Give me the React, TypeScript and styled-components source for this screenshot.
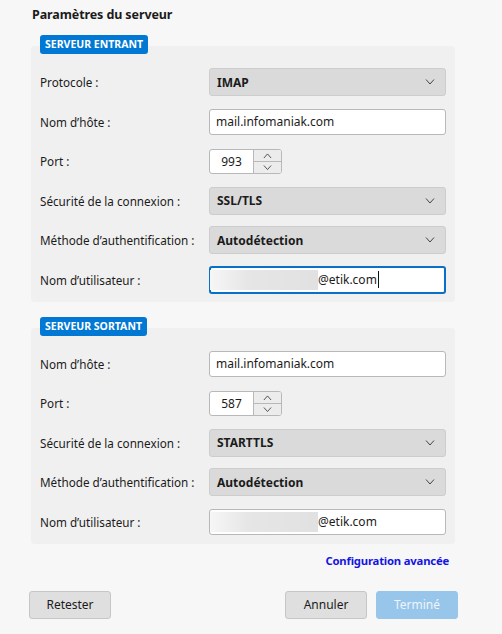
import React from "react";
import styled, { createGlobalStyle } from "styled-components";

const GlobalStyle = createGlobalStyle`
  * { box-sizing: border-box; }
  body {
    margin: 0;
    background: #f7f7f7;
    font-family: "Noto Sans", "Open Sans", sans-serif;
    color: #1b1b1b;
  }
`;

const Page = styled.div`
  width: 502px;
  height: 634px;
  padding: 6px 47px 0 31px;
  display: flex;
  flex-direction: column;
`;

const Titre = styled.h1`
  margin: 0 0 0 1px;
  font-size: 12.5px;
  line-height: 18px;
  font-weight: 700;
  letter-spacing: -0.1px;
`;

const Panneau = styled.section<{ $espace: number }>`
  width: 424px;
  margin-top: ${(p) => p.$espace}px;
  background: #f0f0f0;
  border-radius: 4px;
  padding: 0 9px 2px;
  display: flex;
  flex-direction: column;
`;

const Badge = styled.div`
  align-self: flex-start;
  margin: -11px 0 8.5px;
  height: 19px;
  padding: 0 5px;
  background: #0078d4;
  color: #fff;
  border-radius: 3px;
  font-size: 10.5px;
  font-weight: 700;
  line-height: 19px;
`;

const Ligne = styled.div`
  height: 39.5px;
  display: flex;
  align-items: center;
`;

const Libelle = styled.label`
  width: 169px;
  font-size: 11.7px;
`;

const Liste = styled.div`
  width: 237px;
  height: 28px;
  padding: 0 10px 0 7px;
  display: flex;
  align-items: center;
  justify-content: space-between;
  background: #dadada;
  border: 1px solid #cdcdcd;
  border-radius: 3px;
  font-size: 12px;
  font-weight: 700;
`;

const Champ = styled.div<{ $actif?: boolean }>`
  width: 237px;
  height: ${(p) => (p.$actif ? 28 : 26)}px;
  padding: 0 ${(p) => (p.$actif ? 5 : 6)}px;
  display: flex;
  align-items: center;
  background: #fff;
  border: ${(p) => (p.$actif ? "2px solid #0a6fc6" : "1px solid #b8b8b8")};
  border-radius: 3px;
  font-size: 12px;
`;

const Masque = styled.span`
  width: 108px;
  height: 20px;
  margin-left: -6px;
  background: linear-gradient(to right, #f6f6f6, #e6e6e6 35%, #e1e1e1);
`;

const Curseur = styled.span`
  width: 1px;
  height: 17px;
  margin-left: 1px;
  background: #111;
`;

const Compteur = styled.div`
  height: 25px;
  display: flex;
  border: 1px solid #b8b8b8;
  border-radius: 3px;
  background: #fff;
  overflow: hidden;
`;

const Valeur = styled.div`
  width: 44px;
  display: flex;
  align-items: center;
  justify-content: center;
  font-size: 12px;
  border-right: 1px solid #b8b8b8;
`;

const Fleches = styled.div`
  width: 27px;
  display: flex;
  flex-direction: column;
  background: #ececec;
`;

const Fleche = styled.div`
  flex: 1;
  display: flex;
  align-items: center;
  justify-content: center;
  & + & { border-top: 1px solid #b8b8b8; }
`;

const Lien = styled.a`
  align-self: flex-end;
  margin: 8px 6px 0 0;
  font-size: 11.3px;
  font-weight: 700;
  line-height: 17px;
  letter-spacing: -0.2px;
  color: #1515e2;
  text-decoration: none;
`;

const Pied = styled.div`
  margin: 22px 0 0 -2px;
  width: 429px;
  display: flex;
  gap: 9px;
`;

const Bouton = styled.button<{ $principal?: boolean; $pousse?: boolean }>`
  width: 82px;
  height: 28px;
  margin-left: ${(p) => (p.$pousse ? "auto" : "0")};
  font-family: inherit;
  font-size: 12px;
  color: ${(p) => (p.$principal ? "#eef5fc" : "#1b1b1b")};
  background: ${(p) => (p.$principal ? "#98c5ea" : "#dfdfdf")};
  border: 1px solid ${(p) => (p.$principal ? "#98c5ea" : "#c6c6c6")};
  border-radius: 3px;
`;

function Chevron({ haut, taille = 10 }: { haut?: boolean; taille?: number }) {
  return (
    <svg width={taille} height={taille / 2 + 1} viewBox="0 0 10 6">
      <path
        d={haut ? "M1 5.5 L5 1 L9 5.5" : "M1 0.5 L5 5 L9 0.5"}
        fill="none"
        stroke="#444"
        strokeWidth="1"
      />
    </svg>
  );
}

function ListeDeroulante({ valeur }: { valeur: string }) {
  return (
    <Liste>
      {valeur}
      <Chevron />
    </Liste>
  );
}

function Port({ valeur }: { valeur: string }) {
  return (
    <Compteur>
      <Valeur>{valeur}</Valeur>
      <Fleches>
        <Fleche><Chevron haut taille={9} /></Fleche>
        <Fleche><Chevron taille={9} /></Fleche>
      </Fleches>
    </Compteur>
  );
}

function Utilisateur({ actif }: { actif?: boolean }) {
  return (
    <Champ $actif={actif}>
      <Masque />
      @etik.com
      {actif && <Curseur />}
    </Champ>
  );
}

export default function App() {
  return (
    <>
      <GlobalStyle />
      <Page>
        <Titre>Paramètres du serveur</Titre>

        <Panneau $espace={22}>
          <Badge>SERVEUR ENTRANT</Badge>
          <Ligne>
            <Libelle>Protocole :</Libelle>
            <ListeDeroulante valeur="IMAP" />
          </Ligne>
          <Ligne>
            <Libelle>Nom d’hôte :</Libelle>
            <Champ>mail.infomaniak.com</Champ>
          </Ligne>
          <Ligne>
            <Libelle>Port :</Libelle>
            <Port valeur="993" />
          </Ligne>
          <Ligne>
            <Libelle>Sécurité de la connexion :</Libelle>
            <ListeDeroulante valeur="SSL/TLS" />
          </Ligne>
          <Ligne>
            <Libelle>Méthode d’authentification :</Libelle>
            <ListeDeroulante valeur="Autodétection" />
          </Ligne>
          <Ligne>
            <Libelle>Nom d’utilisateur :</Libelle>
            <Utilisateur actif />
          </Ligne>
        </Panneau>

        <Panneau $espace={26}>
          <Badge>SERVEUR SORTANT</Badge>
          <Ligne>
            <Libelle>Nom d’hôte :</Libelle>
            <Champ>mail.infomaniak.com</Champ>
          </Ligne>
          <Ligne>
            <Libelle>Port :</Libelle>
            <Port valeur="587" />
          </Ligne>
          <Ligne>
            <Libelle>Sécurité de la connexion :</Libelle>
            <ListeDeroulante valeur="STARTTLS" />
          </Ligne>
          <Ligne>
            <Libelle>Méthode d’authentification :</Libelle>
            <ListeDeroulante valeur="Autodétection" />
          </Ligne>
          <Ligne>
            <Libelle>Nom d’utilisateur :</Libelle>
            <Utilisateur />
          </Ligne>
        </Panneau>

        <Lien href="#">Configuration avancée</Lien>

        <Pied>
          <Bouton>Retester</Bouton>
          <Bouton $pousse>Annuler</Bouton>
          <Bouton $principal>Terminé</Bouton>
        </Pied>
      </Page>
    </>
  );
}
